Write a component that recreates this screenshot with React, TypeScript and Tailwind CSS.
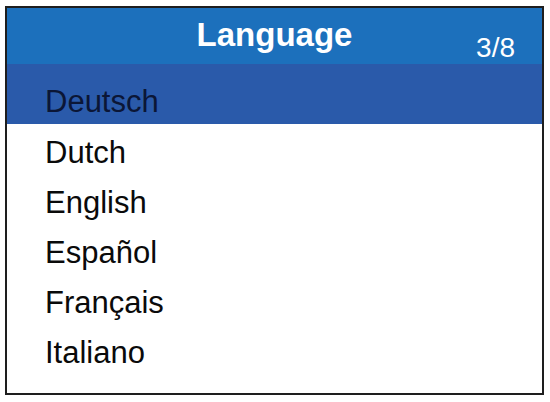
import React from "react";

const items = ["Dutch", "English", "Español", "Français", "Italiano"];

export default function App() {
  return (
    <div className="w-[550px] h-[402px] bg-white pt-[6px] pl-[5px]" style={{ fontFamily: '"Liberation Sans", Arial, sans-serif' }}>
      <div className="w-[539px] h-[389px] border-2 border-[#1e1e1e] flex flex-col">
        <div className="h-[56px] bg-[#1c70bc] grid grid-cols-[1fr_auto_1fr] text-white">
          <div />
          <div className="pt-[10px] text-[33px] leading-[33px] font-bold">Language</div>
          <div className="flex justify-end pr-[27px] pt-[26px] text-[28px] leading-[28px]">3/8</div>
        </div>
        <div className="h-[60px] bg-[#2a5aaa] pl-[38px] pt-[13px] text-[31px] leading-[50px] text-[#0b1636]">
          Deutsch
        </div>
        <div className="pt-[4px] flex flex-col">
          {items.map((t) => (
            <div key={t} className="h-[50px] pl-[38px] text-[31px] leading-[50px] text-[#0a0a0a]">
              {t}
            </div>
          ))}
        </div>
      </div>
    </div>
  );
}
